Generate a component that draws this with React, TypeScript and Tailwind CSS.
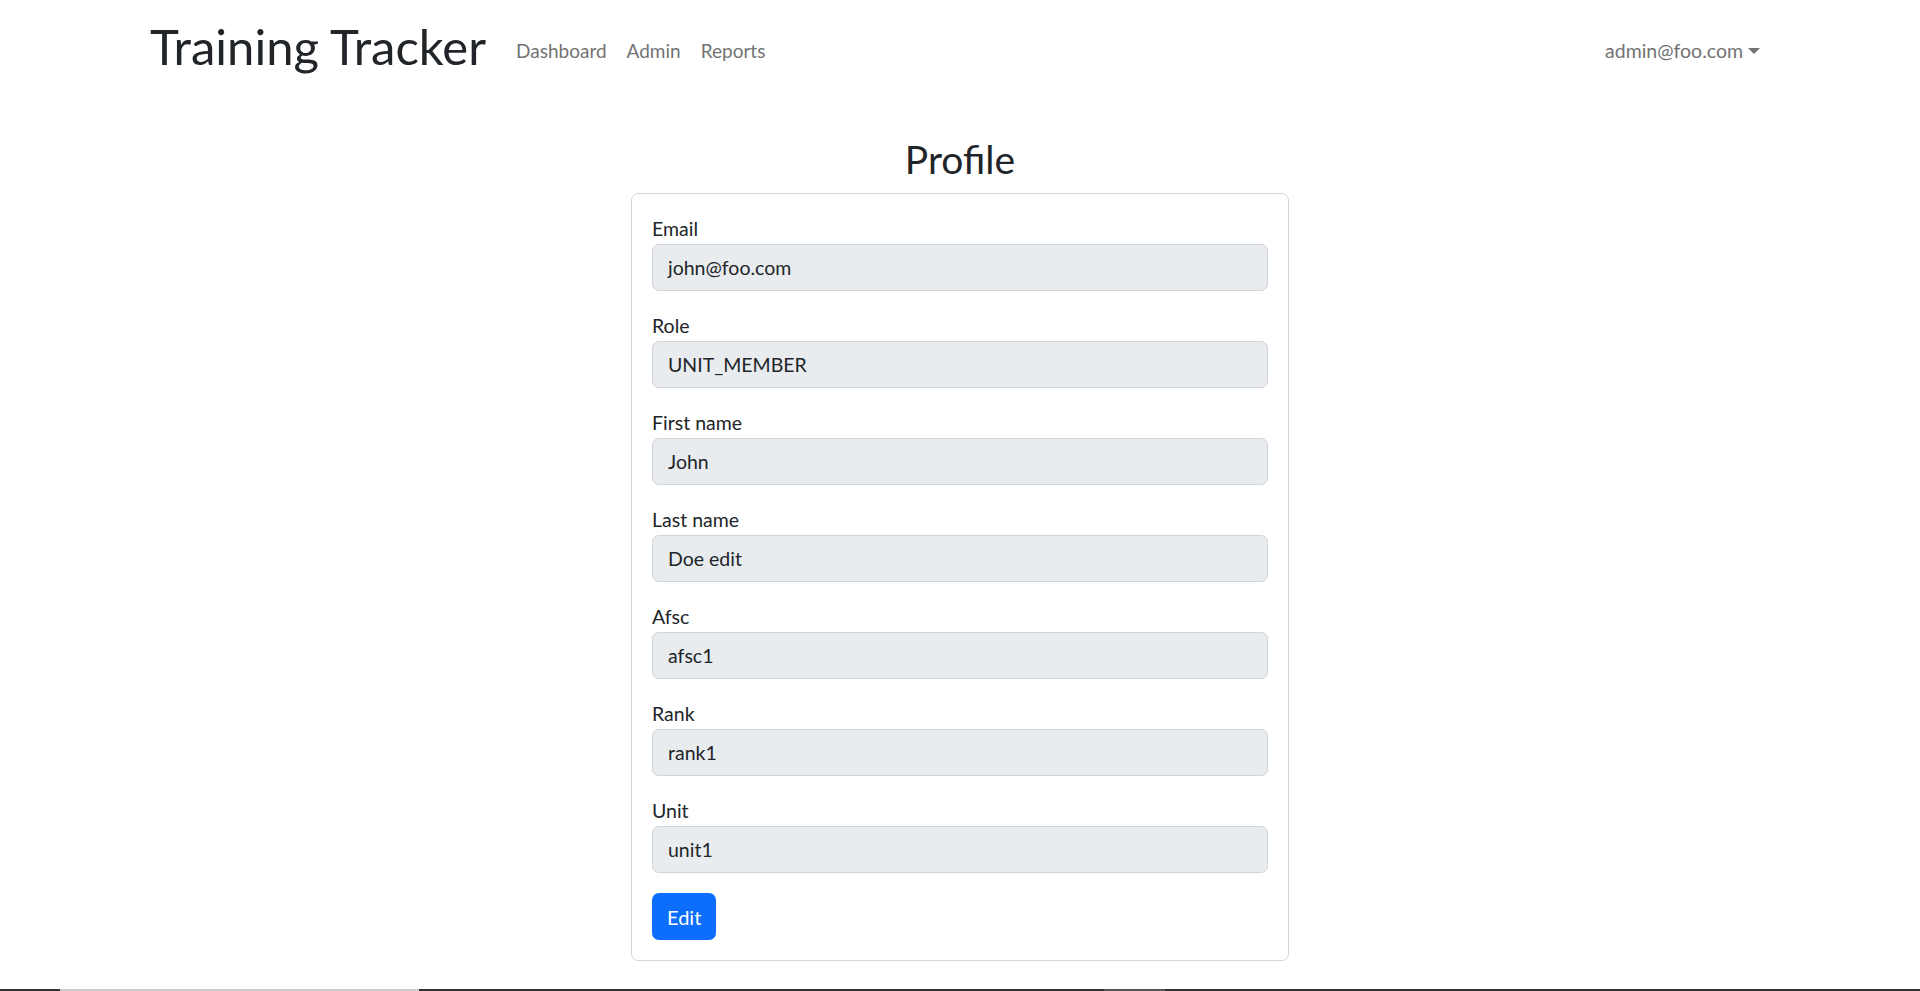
import React from "react";

const fields = [
  { label: "Email", value: "john@foo.com" },
  { label: "Role", value: "UNIT_MEMBER" },
  { label: "First name", value: "John" },
  { label: "Last name", value: "Doe edit" },
  { label: "Afsc", value: "afsc1" },
  { label: "Rank", value: "rank1" },
  { label: "Unit", value: "unit1" },
];

export default function App() {
  return (
    <div
      className="h-[991px] flex flex-col bg-white text-[#212529] overflow-hidden"
      style={{ fontFamily: "Lato, 'Noto Sans', sans-serif" }}
    >
      <nav className="px-[150px] pt-[16px] flex items-center">
        <div className="text-[49px] leading-[60px] mr-[20px]">Training Tracker</div>
        <div className="flex items-center text-[19px] leading-[30px] text-[#737373] mt-[10px]">
          <span className="px-[10px]">Dashboard</span>
          <span className="px-[10px]">Admin</span>
          <span className="px-[10px]">Reports</span>
        </div>
        <div className="ml-auto flex items-center text-[19.5px] leading-[30px] text-[#737373] mt-[10px] px-[10px]">
          <span>admin@foo.com</span>
          <span className="ml-[5px] w-0 h-0 border-t-[6px] border-t-[#737373] border-x-[6px] border-x-transparent" />
        </div>
      </nav>

      <main className="flex-1 flex flex-col items-center">
        <h2 className="text-[39px] leading-[48px] mt-[59px] mb-[10px]">Profile</h2>
        <div className="w-[658px] border border-[#d5d6d7] rounded-[7px] p-[20px] flex flex-col">
          {fields.map((f) => (
            <div key={f.label} className="mb-[20px] flex flex-col">
              <label className="text-[19.5px] leading-[30px]">{f.label}</label>
              <div className="h-[47px] bg-[#e9ecef] border border-[#ced4da] rounded-[7px] px-[15px] flex items-center text-[19.5px] leading-[30px]">
                {f.value}
              </div>
            </div>
          ))}
          <div>
            <button className="h-[47px] px-[15px] bg-[#0d6efd] text-white rounded-[7px] text-[20px] leading-[30px]">
              Edit
            </button>
          </div>
        </div>
      </main>

      <div className="h-[2px] flex shrink-0 bg-[#333333]">
        <div className="w-[60px]" />
        <div className="w-[359px] bg-[#cdcdcd]" />
        <div className="w-[685px]" />
        <div className="w-[61px] bg-[#555555]" />
      </div>
    </div>
  );
}
